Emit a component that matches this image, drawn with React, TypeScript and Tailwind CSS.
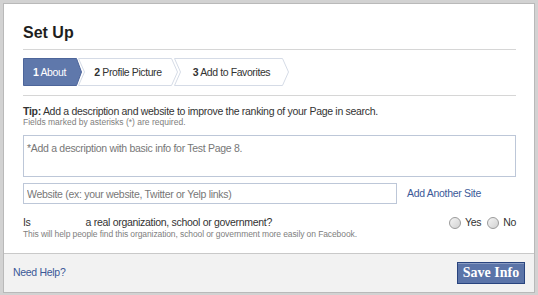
import React from "react";

function Step({
  width,
  points,
  fill,
  stroke,
  className,
  children,
}: {
  width: number;
  points: string;
  fill: string;
  stroke: string;
  className: string;
  children: React.ReactNode;
}) {
  return (
    <div className={"relative h-[28px] flex items-center justify-center " + className} style={{ width }}>
      <svg className="absolute inset-0" width={width} height={28} viewBox={`0 0 ${width} 28`}>
        <polygon points={points} fill={fill} stroke={stroke} strokeWidth={1} />
      </svg>
      <span className="relative text-[10.5px] leading-[13px] tracking-[-0.4px] whitespace-nowrap">{children}</span>
    </div>
  );
}

function Radio({ label }: { label: string }) {
  return (
    <label className="flex items-center gap-[4px]">
      <span className="w-[12px] h-[12px] rounded-full border border-[#9a9a9a] bg-gradient-to-br from-[#f4f4f4] to-[#d2d2d2]" />
      <span>{label}</span>
    </label>
  );
}

export default function App() {
  return (
    <div className="w-[538px] h-[295px] bg-[#d2d2d2] pt-[3px] pb-[2px] px-[3px] font-['Liberation_Sans',Arial,sans-serif] text-[#333]">
      <div className="h-full border border-[#b9b9b9] bg-white flex flex-col">
        <div className="flex-1 pl-[19px] pr-[18px] pt-[19px]">
          <h1 className="text-[16px] leading-[20px] font-bold text-[#1e1e1e]">Set Up</h1>
          <div className="mt-[6px] border-t border-[#d6d6d6]" />
          <div className="mt-[8px] flex">
            <Step
              width={59}
              points="0.5,0.5 53.5,0.5 58.5,14 53.5,27.5 0.5,27.5"
              fill="#5f78ab"
              stroke="#4d659a"
              className="pr-[6px] text-white"
            >
              <b>1</b> About
            </Step>
            <Step
              width={100}
              points="0.5,0.5 93.5,0.5 99.5,14 93.5,27.5 0.5,27.5 6.5,14"
              fill="#ffffff"
              stroke="#d5dbe6"
              className="-ml-[4px] px-[6px] text-[#333]"
            >
              <b>2</b> Profile Picture
            </Step>
            <Step
              width={115}
              points="0.5,0.5 108.5,0.5 114.5,14 108.5,27.5 0.5,27.5 6.5,14"
              fill="#ffffff"
              stroke="#d5dbe6"
              className="-ml-[4px] px-[6px] text-[#333]"
            >
              <b>3</b> Add to Favorites
            </Step>
          </div>
          <div className="mt-[9px] border-t border-[#d6d6d6]" />
          <p className="mt-[9px] text-[10.5px] leading-[12px] tracking-[-0.3px]">
            <b>Tip:</b> Add a description and website to improve the ranking of your Page in search.
          </p>
          <p className="text-[8.5px] leading-[11px] text-[#808080]">Fields marked by asterisks (*) are required.</p>
          <textarea
            className="mt-[7px] block w-full h-[42px] border border-[#bdc7d8] px-[3px] pt-[6px] text-[10.5px] leading-[13px] tracking-[-0.3px] resize-none outline-none placeholder:text-[#777]"
            placeholder="*Add a description with basic info for Test Page 8."
          />
          <div className="mt-[6px] flex items-center">
            <input
              className="block w-[374px] h-[21px] border border-[#bdc7d8] px-[3px] text-[10.5px] tracking-[-0.3px] outline-none placeholder:text-[#777]"
              placeholder="Website (ex: your website, Twitter or Yelp links)"
            />
            <a className="ml-[10px] text-[10.5px] tracking-[-0.3px] text-[#3b5998]">Add Another Site</a>
          </div>
          <div className="mt-[12px] flex items-center justify-between text-[10.5px] leading-[13px] tracking-[-0.3px]">
            <span>
              Is<span className="inline-block w-[55px]" />a real organization, school or government?
            </span>
            <div className="flex items-center gap-[6px]">
              <Radio label="Yes" />
              <Radio label="No" />
            </div>
          </div>
          <p className="text-[8.5px] leading-[11px] tracking-[-0.1px] text-[#808080]">
            This will help people find this organization, school or government more easily on Facebook.
          </p>
        </div>
        <div className="h-[39px] border-t border-[#c9c9c9] bg-[#f2f2f2] flex items-center justify-between pl-[9px] pr-[9px]">
          <a className="text-[10.5px] tracking-[-0.3px] text-[#3b5998]">Need Help?</a>
          <button className="w-[68px] h-[22px] bg-[#5b74a8] border border-[#29447e] shadow-[inset_0_1px_0_#8a9cc2] text-white font-bold text-[14px] leading-[18px] font-['Liberation_Serif',serif]">
            Save Info
          </button>
        </div>
      </div>
    </div>
  );
}
